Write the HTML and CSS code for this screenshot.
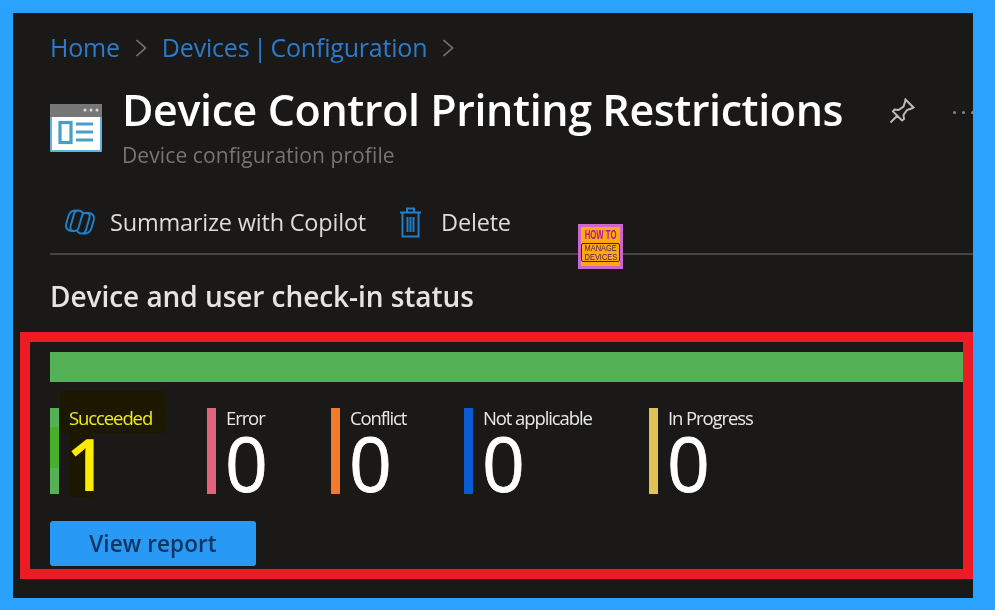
FILE: index.html
```html
<!DOCTYPE html>
<html lang="en">
<head>
<meta charset="utf-8">
<title>Device Control Printing Restrictions</title>
<link rel="stylesheet" href="styles.css">
</head>
<body>
<main class="panel">
  <nav class="crumbs">
    <a>Home</a>
    <svg class="chev" viewBox="0 0 12 20"><path d="M1.500 2 10.500 10 1.500 18"/></svg>
    <a>Devices | Configuration</a>
    <svg class="chev" viewBox="0 0 12 20"><path d="M1.500 2 10.500 10 1.500 18"/></svg>
  </nav>
  <header class="head">
    <svg class="profile-icon" viewBox="0 0 52 48">
      <rect x="0" y="0" width="52" height="48" rx="1" fill="#5fb4dc"/>
      <rect x="0" y="0" width="52" height="13" fill="#777"/>
      <rect x="2" y="13" width="48" height="33" fill="#fff"/>
      <circle cx="35" cy="6" r="1.500" fill="#ddd"/><circle cx="41" cy="6" r="1.500" fill="#ddd"/><circle cx="47" cy="6" r="1.500" fill="#ddd"/>
      <rect x="10" y="18.500" width="11" height="20" fill="none" stroke="#4a9dc4" stroke-width="3.200"/>
      <path d="M26 20h17M26 28h17M26 36h17" stroke="#4a9dc4" stroke-width="2.800"/>
    </svg>
    <div class="titles">
      <h1>Device Control Printing Restrictions</h1>
      <p>Device configuration profile</p>
    </div>
    <svg class="pin" viewBox="0 0 26 26"><path d="M1.500 24.500 9 17M16.500 1.500l8 8-2 1-4.500 1.500-3.500 5 .5 4-2 1.500-9-9 1.500-2 4 .5 5-3.500 1.500-4.500z"/></svg>
    <div class="more"><i></i><i></i><i></i></div>
  </header>
  <div class="toolbar">
    <span class="tool">
      <svg class="copilot" viewBox="0 0 32 30"><path d="M14 3.500h-3C7.500 3.500 5.500 6 4.500 9L2.300 16.500C1 21 3.500 24 7.500 24h3M18 26.500h3c3.500 0 5.500-2.500 6.500-5.500l2.200-7.500C31 9 28.500 6 24.500 6h-3M14 3.500c-2.500 0-3.500 1.500-4 3.500L6.500 19.500c-.8 3 1 4.500 4 4.500M18 26.500c2.500 0 3.500-1.500 4-3.500l3.500-12.500c.8-3-1-4.500-4-4.500M14 3.500c3 0 4.500 1.500 5.200 3.500M18 26.500c-3 0-4.500-1.500-5.200-3.500M10.500 24c2 0 3.300-1 4-3l3.500-12c.6-2 2-3 3.500-3"/></svg>
      Summarize with Copilot
    </span>
    <span class="tool tool-del">
      <svg class="trash" viewBox="0 0 23 31"><path d="M1 5.500h21M8 5.500V1.500h7v4M3.500 5.500v24h16v-24M8.500 10v15M11.500 10v15M14.500 10v15"/></svg>
      Delete
    </span>
  </div>
  <h2>Device and user check-in status</h2>
  <section class="status">
    <div class="progress"></div>
    <div class="stats">
      <div class="stat stat-ok">
        <span class="bar bar-ok"></span>
        <div class="stat-text">
          <span class="label label-hi">Succeeded</span>
          <span class="num num-hi">1</span>
        </div>
      </div>
      <div class="stat stat-err">
        <span class="bar bar-err"></span>
        <div class="stat-text"><span class="label">Error</span><span class="num">0</span></div>
      </div>
      <div class="stat stat-con">
        <span class="bar bar-con"></span>
        <div class="stat-text"><span class="label">Conflict</span><span class="num">0</span></div>
      </div>
      <div class="stat stat-na">
        <span class="bar bar-na"></span>
        <div class="stat-text"><span class="label">Not applicable</span><span class="num">0</span></div>
      </div>
      <div class="stat">
        <span class="bar bar-ip"></span>
        <div class="stat-text"><span class="label">In Progress</span><span class="num">0</span></div>
      </div>
    </div>
    <button class="report" type="button">View report</button>
  </section>
  <div class="badge">
    <span class="badge-top">HOW TO</span>
    <span class="badge-box"><span class="badge-line">MANAGE</span><span class="badge-line">DEVICES</span></span>
  </div>
</main>
</body>
</html>
```
FILE: styles.css
```css
* { box-sizing: border-box; }
html, body { margin: 0; height: 100%; }
body {
  background: #2aa3ff;
  padding: 13px 22px 12px 13px;
  font-family: "Open Sans", "Noto Sans", "Liberation Sans", sans-serif;
  overflow: hidden;
}
.panel {
  position: relative;
  height: 585px;
  background: #1a1918;
  padding: 18px 0 0 7px;
  overflow: hidden;
  filter: blur(0.45px);
}
.crumbs {
  display: flex;
  align-items: center;
  height: 32px;
  margin-left: 30px;
  font-size: 25px;
  letter-spacing: -0.2px;
  word-spacing: -2.500px;
  color: #2a7ccc;
}
.chev { width: 12px; height: 20px; margin: 2px 15px 0 15px; fill: none; stroke: #777; stroke-width: 1.600; }
.head {
  display: flex;
  align-items: flex-start;
  margin: 18px 0 0 30px;
  height: 88px;
}
.profile-icon { width: 52px; height: 48px; margin-top: 23px; flex: none; }
.titles { margin-left: 20px; width: 767px; flex: none; }
h1 {
  margin: 0;
  font-size: 43px;
  line-height: 58px;
  font-weight: 600;
  letter-spacing: -0.4px;
  color: #fff;
  white-space: nowrap;
}
.titles p {
  margin: 2px 0 0;
  font-size: 21px;
  line-height: 28px;
  letter-spacing: 0.1px;
  color: #787472;
}
.pin { width: 26px; height: 26px; margin-top: 17px; flex: none; fill: none; stroke: #bbb; stroke-width: 2; }
.more { display: flex; gap: 6px; margin: 30px 0 0 38px; flex: none; }
.more i { width: 3px; height: 3px; border-radius: 50%; background: #888; }
.toolbar {
  display: flex;
  align-items: center;
  margin: 22px 0 0 30px;
  height: 64px;
  padding: 0 0 0 14px;
  border-bottom: 2px solid #444;
  font-size: 23.500px;
  font-weight: 500;
  letter-spacing: -0.2px;
  color: #dedcda;
}
.tool { display: flex; align-items: center; }
.tool-del { margin-left: 33px; }
.copilot { width: 32px; height: 30px; margin-right: 14px; fill: none; stroke: #1f7fc9; stroke-width: 2; }
.trash { width: 23px; height: 31px; margin-right: 19px; fill: none; stroke: #1f7fc9; stroke-width: 2; }
h2 {
  margin: 23px 0 0 30px;
  height: 54px;
  font-size: 28px;
  line-height: 36px;
  font-weight: 600;
  letter-spacing: -0.05px;
  color: #e6e4e2;
}
.status {
  height: 247px;
  border: 10px solid #ed1c24;
  padding: 10px 0 0 20px;
}
.progress { height: 30px; background: #55b155; }
.stats { display: flex; margin-top: 26px; height: 86px; }
.stat { display: flex; }
.stat-ok { width: 157px; }
.stat-err { width: 124px; }
.stat-con { width: 133px; }
.stat-na { width: 185px; }
.bar { width: 9px; height: 86px; flex: none; background: #55b155; }
.bar-ok { background: linear-gradient(#55b155 22%, #45b02a 22%, #45b02a 70%, #55b155 70%); }
.bar-err { background: #e0647c; }
.bar-con { background: #f5792a; }
.bar-na { background: #0b5bd3; }
.bar-ip { background: #e2c257; }
.stat-text { display: flex; flex-direction: column; margin-left: 10px; align-items: flex-start; }
.label {
  margin-top: -1px;
  font-size: 18.500px;
  line-height: 22px;
  font-weight: 500;
  letter-spacing: -1.100px;
  color: #e9e9e9;
  white-space: nowrap;
}
.num {
  margin-top: 1px;
  margin-left: -1px;
  font-size: 75px;
  line-height: 67px;
  font-weight: 400;
  -webkit-text-stroke: 0.8px #fff;
  color: #fff;
}
.label-hi {
  margin: -17px -13px -4px -9px;
  padding: 16px 13px 4px 9px;
  color: #f0ec1a;
  background: #1c1800;
}
.num-hi {
  width: 24px;
  height: 78px;
  margin-left: 0;
  text-indent: -3px;
  color: #ffeb00;
  -webkit-text-stroke: 0;
  font-size: 72px;
  font-weight: 600;
  background: #1c1800;
}
.report {
  display: block;
  width: 206px;
  height: 45px;
  margin-top: 27px;
  padding: 0;
  border: 0;
  border-radius: 3px;
  background: #2899f5;
  color: #0f3560;
  font: 600 22.500px "Open Sans", sans-serif;
  letter-spacing: 0.1px;
}
.badge {
  position: absolute;
  left: 565px;
  top: 211px;
  width: 45px;
  height: 45px;
  border: 3px solid #cc66cc;
  background: #ffa812;
  display: flex;
  flex-direction: column;
  align-items: center;
  font-family: "Liberation Sans", sans-serif;
  color: #b0169c;
}
.badge-top {
  margin-top: 2px;
  font-size: 12.500px;
  line-height: 13px;
  font-weight: 700;
  white-space: nowrap;
  transform: scaleX(0.62);
}
.badge-box {
  display: flex;
  flex-direction: column;
  align-items: center;
  width: 39px;
  height: 19px;
  margin-top: 1px;
  border: 1px solid #3b1a6b;
  border-radius: 2px;
  color: #3b1a6b;
  font-size: 9.500px;
  line-height: 8.500px;
  white-space: nowrap;
}
.badge-line { transform: scaleX(0.78); }
```
